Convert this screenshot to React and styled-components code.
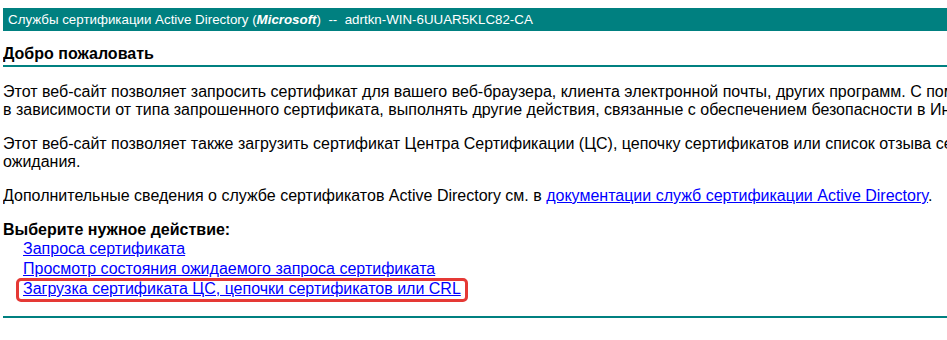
import React from "react";
import styled, { createGlobalStyle } from "styled-components";

const Global = createGlobalStyle`
  html, body { overflow: hidden; }
  body {
    margin: 8px 0 0 3px;
    background: #ffffff;
    font-family: "Liberation Sans", Arial, sans-serif;
    color: #000000;
  }
`;

const Page = styled.div`
  width: 1700px;
`;

const TitleBar = styled.div`
  background: #008080;
  color: #ffffff;
  font-size: 13.33px;
  line-height: 15px;
  padding: 4px 5px;
  white-space: pre;
  height: 15px;
`;

const PageTitle = styled.div`
  margin-top: 14px;
  font-size: 16px;
  font-weight: bold;
  line-height: 18px;
  padding-bottom: 2px;
  border-bottom: 2px solid #008080;
`;

const Para = styled.p`
  margin: 16px 0 0;
  font-size: 16px;
  line-height: 18px;
  white-space: nowrap;
`;

const Link = styled.a`
  color: #0000ff;
  text-decoration: underline;
`;

const TaskBlock = styled.div`
  margin-top: 16px;
  font-size: 16px;
`;

const TaskHead = styled.div`
  font-weight: bold;
  line-height: 18px;
`;

const TaskList = styled.div`
  display: flex;
  flex-direction: column;
  padding-left: 20px;
`;

const TaskItem = styled.div`
  line-height: 20px;
  position: relative;
  align-self: flex-start;
`;

const Highlight = styled.span`
  position: absolute;
  left: -7px;
  right: -7px;
  top: -1px;
  bottom: -3px;
  border: 3px solid #e53935;
  border-radius: 5px;
  pointer-events: none;
`;

const Footer = styled.div`
  margin-top: 17px;
  border-top: 2px solid #008080;
`;

export default function App() {
  return (
    <>
      <Global />
      <Page>
        <TitleBar>
          Службы сертификации Active Directory (<b><i>Microsoft</i></b>)  --  adrtkn-WIN-6UUAR5KLC82-CA
        </TitleBar>
        <PageTitle>Добро пожаловать</PageTitle>
        <Para>
          Этот веб-сайт позволяет запросить сертификат для вашего веб-браузера, клиента электронной почты, других программ. С помощью сертификата вы сможете подтвердить свою личность другим пользователям в Интернете,
          <br />
          в зависимости от типа запрошенного сертификата, выполнять другие действия, связанные с обеспечением безопасности в Интернете.
        </Para>
        <Para>
          Этот веб-сайт позволяет также загрузить сертификат Центра Сертификации (ЦС), цепочку сертификатов или список отзыва сертификатов (CRL), или просмотреть состояние запроса в состоянии
          <br />
          ожидания.
        </Para>
        <Para>
          Дополнительные сведения о службе сертификатов Active Directory см. в{" "}
          <Link href="#">документации служб сертификации Active Directory</Link>.
        </Para>
        <TaskBlock>
          <TaskHead>Выберите нужное действие:</TaskHead>
          <TaskList>
            <TaskItem>
              <Link href="#">Запроса сертификата</Link>
            </TaskItem>
            <TaskItem>
              <Link href="#">Просмотр состояния ожидаемого запроса сертификата</Link>
            </TaskItem>
            <TaskItem>
              <Link href="#">Загрузка сертификата ЦС, цепочки сертификатов или CRL</Link>
              <Highlight />
            </TaskItem>
          </TaskList>
        </TaskBlock>
        <Footer />
      </Page>
    </>
  );
}
